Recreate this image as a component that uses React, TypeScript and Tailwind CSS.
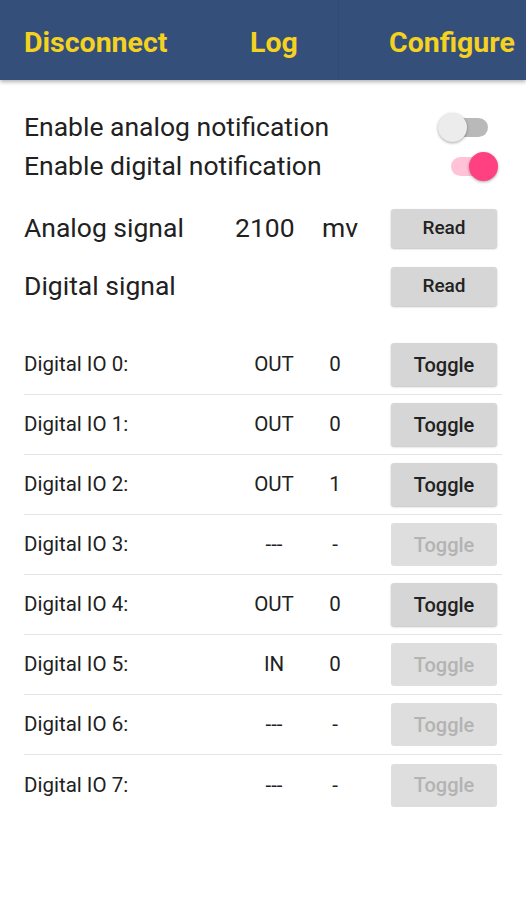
import React from "react";

const rows = [
  { n: 0, t: "OUT", v: "0", en: true },
  { n: 1, t: "OUT", v: "0", en: true },
  { n: 2, t: "OUT", v: "1", en: true },
  { n: 3, t: "---", v: "-", en: false },
  { n: 4, t: "OUT", v: "0", en: true },
  { n: 5, t: "IN", v: "0", en: false },
  { n: 6, t: "---", v: "-", en: false },
  { n: 7, t: "---", v: "-", en: false },
];

function Switch({ on }: { on: boolean }) {
  return (
    <div className="relative w-[60px] h-[30px] mr-[3px] shrink-0">
      <div
        className={
          on
            ? "absolute left-[12px] top-[6px] w-[46px] h-[19px] rounded-full bg-[#ffc2d6]"
            : "absolute left-[2px] top-[6px] w-[47px] h-[19px] rounded-full bg-[#b9b9b9]"
        }
      />
      <div
        className={
          on
            ? "absolute left-[30px] top-[1px] w-[29px] h-[29px] rounded-full bg-[#ff4081] shadow-[0_1px_3px_rgba(0,0,0,0.35)]"
            : "absolute left-[-1px] top-[1px] w-[29px] h-[29px] rounded-full bg-[#ececec] shadow-[0_1px_3px_rgba(0,0,0,0.35)]"
        }
      />
    </div>
  );
}

export default function App() {
  return (
    <div className="w-[526px] h-[900px] bg-white overflow-hidden" style={{ fontFamily: "Roboto, 'Noto Sans', sans-serif" }}>
      <div className="relative h-[80px] bg-[#34507a] flex items-center shadow-[0_2px_4px_rgba(0,0,0,0.3)] z-10">
        <div className="w-[210px] h-full flex items-center pt-[6px] pl-[24px] text-[28.5px] font-bold text-[#f4d21f]">Disconnect</div>
        <div className="w-[128px] h-full flex items-center pt-[6px] justify-center text-[28.5px] font-bold text-[#f4d21f]">Log</div>
        <div className="h-full flex items-center pt-[6px] pl-[50px] border-l border-black/5 text-[28.5px] font-bold text-[#f4d21f] whitespace-nowrap">Configure</div>
      </div>

      <div className="px-[24px] pt-[28px] text-[#212121]">
        <div className="flex items-center justify-between h-[38px]">
          <span className="text-[26.5px]">Enable analog notification</span>
          <Switch on={false} />
        </div>
        <div className="flex items-center justify-between h-[40px]">
          <span className="text-[26.5px]">Enable digital notification</span>
          <Switch on={true} />
        </div>

        <div className="flex items-center h-[40px] mt-[22px]">
          <span className="w-[211px] text-[26.5px]">Analog signal</span>
          <span className="w-[87px] text-[26.5px]">2100</span>
          <span className="text-[26.5px]">mv</span>
          <button className="ml-auto mr-[5px] w-[106px] h-[39px] rounded-[3px] bg-[#d6d6d6] shadow-[0_1px_2px_rgba(0,0,0,0.25)] text-[19px] font-medium text-[#222]">Read</button>
        </div>
        <div className="flex items-center h-[40px] mt-[18px]">
          <span className="text-[26.5px]">Digital signal</span>
          <button className="ml-auto mr-[5px] w-[106px] h-[39px] rounded-[3px] bg-[#d6d6d6] shadow-[0_1px_2px_rgba(0,0,0,0.25)] text-[19px] font-medium text-[#222]">Read</button>
        </div>

        <div className="mt-[29px]">
          {rows.map((r, i) => (
            <div
              key={r.n}
              className={
                i < rows.length - 1
                  ? "flex items-center h-[60px] border-b border-[#e4e4e4]"
                  : "flex items-center h-[60px]"
              }
            >
              <span className="w-[210px] text-[20.5px]">Digital IO {r.n}:</span>
              <span className="w-[80px] text-center text-[20.5px]">{r.t}</span>
              <span className="w-[42px] text-center text-[20.5px]">{r.v}</span>
              <button
                className={
                  r.en
                    ? "ml-auto mr-[5px] w-[106px] h-[43px] rounded-[3px] bg-[#d6d6d6] shadow-[0_1px_2px_rgba(0,0,0,0.25)] text-[20px] font-medium text-[#222]"
                    : "ml-auto mr-[5px] w-[106px] h-[43px] rounded-[3px] bg-[#dedede] text-[20px] font-medium text-[#b3b3b3]"
                }
              >
                Toggle
              </button>
            </div>
          ))}
        </div>
      </div>
    </div>
  );
}
